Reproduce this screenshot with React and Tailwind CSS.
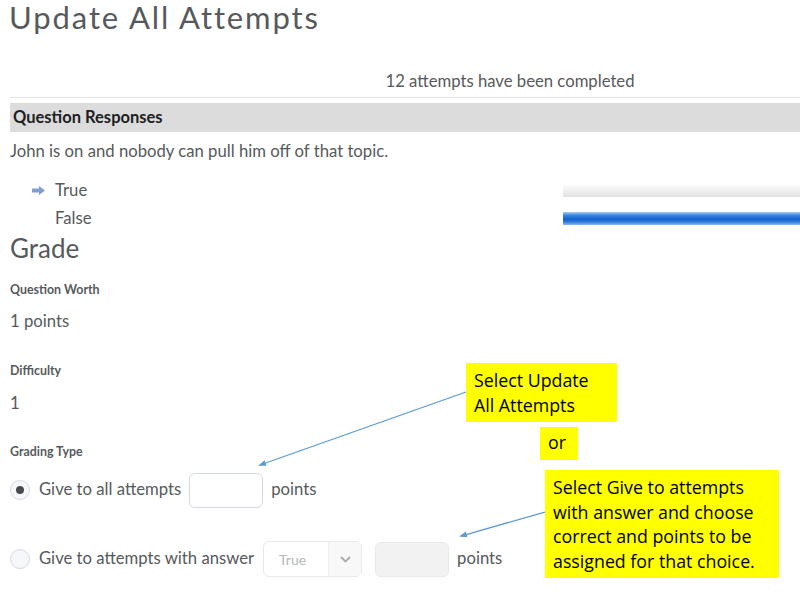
import React from "react";

function Radio({ checked }) {
  return (
    <div className="w-[20px] h-[20px] rounded-full border border-[#d3d9e3] bg-[#f6f7f9] flex items-center justify-center shrink-0">
      {checked && <div className="w-[8px] h-[8px] rounded-full bg-[#494c4e]" />}
    </div>
  );
}

export default function App() {
  return (
    <div className="relative w-[800px] h-[599px] overflow-hidden bg-white text-[#565a5c] font-['Lato',sans-serif]">
      <div className="pl-[9px] h-[35px] leading-[34px] text-[31px] tracking-[1.9px] text-[#565a5c]">Update All Attempts</div>
      <div className="mt-[35px] pl-[220px] text-center h-[22px] leading-[22px] text-[16.7px]">12 attempts have been completed</div>
      <div className="ml-[10px] mt-[5px] border-t border-[#e1e6ec]" />
      <div className="ml-[10px] mt-[5px] h-[29px] leading-[29px] bg-[#dcdcdc] pl-[3px] text-[16.5px] font-bold text-[#202122]">Question Responses</div>
      <div className="pl-[10px] mt-[8px] h-[22px] leading-[22px] text-[16.7px]">John is on and nobody can pull him off of that topic.</div>
      <div className="mt-[14px] h-[29px] flex items-center">
        <div className="w-[55px] flex justify-end pr-[10px]">
          <svg width="13" height="9" viewBox="0 0 13 9">
            <polygon points="0,2.5 7,2.5 7,0 13,4.5 7,9 7,6.5 0,6.5" fill="#7f9fcf" />
          </svg>
        </div>
        <div className="text-[16.7px] w-[508px]">True</div>
        <div className="flex-1 h-[12px] bg-[linear-gradient(to_bottom,#fafafa,#ececec_60%,#e2e2e2)]" />
      </div>
      <div className="h-[27px] flex items-center">
        <div className="w-[55px]" />
        <div className="text-[16.7px] w-[508px]">False</div>
        <div className="flex-1 h-[13px] bg-[linear-gradient(to_bottom,#a9ccf4,#3a86e0_25%,#1262cf_55%,#2b78db_75%,#8fbdf1)]" />
      </div>
      <div className="pl-[10px] h-[32px] leading-[32px] text-[26px]">Grade</div>
      <div className="pl-[10px] mt-[18px] h-[16px] leading-[16px] text-[12.4px] font-bold">Question Worth</div>
      <div className="pl-[10px] mt-[12px] h-[22px] leading-[22px] text-[16.7px]">1 points</div>
      <div className="pl-[10px] mt-[31px] h-[16px] leading-[16px] text-[12.4px] font-bold">Difficulty</div>
      <div className="pl-[10px] mt-[13px] h-[22px] leading-[22px] text-[16.7px]">1</div>
      <div className="pl-[10px] mt-[30px] h-[16px] leading-[16px] text-[12.4px] font-bold">Grading Type</div>
      <div className="pl-[10px] mt-[12px] h-[36px] flex items-center text-[16.7px]">
        <Radio checked />
        <span className="ml-[9px]">Give to all attempts</span>
        <div className="ml-[8px] w-[74px] h-[35px] rounded-[6px] border border-[#d3d9e3] bg-white" />
        <span className="ml-[8px]">points</span>
      </div>
      <div className="pl-[10px] mt-[33px] h-[36px] flex items-center text-[16.7px]">
        <Radio />
        <span className="ml-[9px]">Give to attempts with answer</span>
        <div className="ml-[9px] w-[99px] h-[36px] rounded-[6px] border border-[#e6e9ee] bg-white flex overflow-hidden">
          <div className="w-[64px] pl-[15px] flex items-center text-[14px] text-[#b3b7bb]">True</div>
          <div className="flex-1 border-l border-[#eceef1] bg-[#f8f8f8] flex items-center justify-center">
            <svg width="11" height="7" viewBox="0 0 11 7">
              <polyline points="1,1 5.5,5.5 10,1" fill="none" stroke="#a7abaf" strokeWidth="1.8" />
            </svg>
          </div>
        </div>
        <div className="ml-[13px] w-[74px] h-[35px] rounded-[6px] border border-[#e8e9eb] bg-[#f2f2f2]" />
        <span className="ml-[8px]">points</span>
      </div>

      <svg className="absolute left-0 top-0 pointer-events-none" width="800" height="599">
        <defs>
          <marker id="ah" markerWidth="8" markerHeight="8" refX="6" refY="4" orient="auto" markerUnits="userSpaceOnUse">
            <polygon points="0,1 8,4 0,7" fill="#5b9bd5" />
          </marker>
        </defs>
        <line x1="466" y1="392" x2="260" y2="465" stroke="#5b9bd5" strokeWidth="1.3" markerEnd="url(#ah)" />
        <line x1="545" y1="512" x2="461" y2="536" stroke="#5b9bd5" strokeWidth="1.3" markerEnd="url(#ah)" />
      </svg>

      <div className="absolute left-[466px] top-[363px] w-[151px] h-[59px] bg-[#ffff00] pl-[8px] pt-[5px] text-[17.8px] leading-[25px] text-black font-['Open_Sans',sans-serif]">
        Select Update<br />All Attempts
      </div>
      <div className="absolute left-[540px] top-[427px] w-[38px] h-[33px] bg-[#ffff00] pl-[8px] pt-[3px] text-[17.8px] leading-[25px] text-black font-['Open_Sans',sans-serif]">
        or
      </div>
      <div className="absolute left-[545px] top-[470px] w-[234px] h-[108px] bg-[#ffff00] pl-[8px] pt-[5px] text-[17.8px] leading-[24.5px] text-black font-['Open_Sans',sans-serif] whitespace-nowrap">
        Select Give to attempts<br />with answer and choose<br />correct and points to be<br />assigned for that choice.
      </div>
    </div>
  );
}
